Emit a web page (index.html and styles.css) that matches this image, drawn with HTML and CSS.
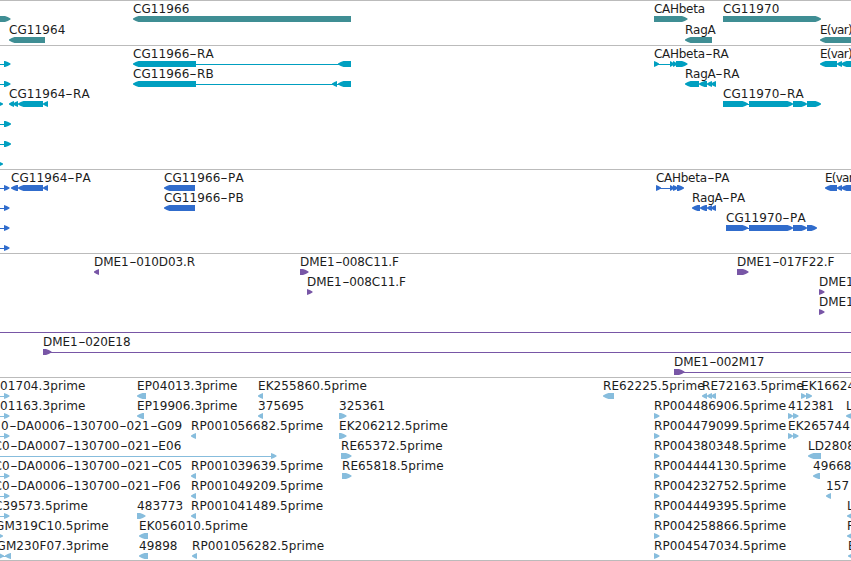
FILE: index.html
```
<!DOCTYPE html>
<html lang="en">
<head>
    <meta charset="UTF-8">
    <meta name="viewport" content="width=device-width, initial-scale=1.0">
    <title>Genome Browser</title>
    <link rel="stylesheet" href="styles.css">
</head>
<body>
    <div class="browser">
        <div class="track genes" id="genes"></div>
        <div class="track transcripts" id="transcripts"></div>
        <div class="track proteins" id="proteins"></div>
        <div class="track clones" id="clones"></div>
        <div class="track ests" id="ests"></div>
    </div>

    <script src="tracks.js"></script>
</body>
</html>
```

FILE: styles.css
```
body {
    margin: 0;
    background-color: #fff;
    overflow: hidden;
}

.browser {
    width: 851px;
    height: 561px;
    box-sizing: border-box;
    overflow: hidden;
    border-bottom: 1px solid #bbb;
}

.track {
    box-sizing: border-box;
    border-top: 1px solid #bbb;
    overflow: hidden;
}

.genes {
    height: 45px;
    color: #3f8e94;
}

.transcripts {
    height: 124px;
    color: #009fc0;
}

.proteins {
    height: 84px;
    color: #306ccc;
}

.clones {
    height: 124px;
    color: #7856a6;
}

.ests {
    height: 183px;
    color: #87bddd;
}

.lane {
    position: relative;
    height: 20px;
}

.genes .lane {
    height: 21px;
}

.lane svg {
    display: block;
    position: absolute;
    left: 0;
    top: 15px;
    width: 851px;
    height: 6px;
    fill: currentColor;
    overflow: visible;
}

/* labels and features sit at their place on the sequence */
.label {
    position: absolute;
    top: 1px;
    font-family: "DejaVu Sans", sans-serif;
    font-size: 12px;
    line-height: 15px;
    letter-spacing: 0.08px;
    font-kerning: none;
    white-space: nowrap;
    color: #1c1c1c;
}

.label.tight {
    letter-spacing: -0.28px;
}

.label.tighter {
    letter-spacing: -0.75px;
}

.clones .label {
    letter-spacing: -0.08px;
}

.dash {
    display: inline-block;
    width: 7.7px;
    text-align: center;
    letter-spacing: 0;
    transform: scaleX(1.7);
}
```

FILE: tracks.js
```
// a label is [x, text], a feature is [start, end, direction]
// direction: '>' forward, '<' reverse, '-' thin line
const rp = [654, 659.5, '>'];
const edge = [[-1, 5, '-'], [4, 9.5, '>']];

const tracks = {
    genes: [
        {
            labels: [[133, 'CG11966'], [654, 'CAHbeta'], [723, 'CG11970']],
            features: [[-9, 10.5, '>'], [133, 351, '<'], [654, 687.5, '>'], [723, 821, '>']]
        },
        {
            labels: [[9, 'CG11964'], [685, 'RagA'], [820, 'E(var)']],
            features: [[9, 45, '<'], [685, 712, '<'], [820, 870, '<']]
        }
    ],
    transcripts: [
        {
            labels: [[133, 'CG11966-RA'], [654, 'CAHbeta-RA'], [820, 'E(var)']],
            features: [[-1, 5, '-'], [4, 10.5, '>'], [133, 196, '<'], [196, 339, '-'], [338, 351, '<'],
                [654, 659, '>'], [657, 671, '-'], [670, 674, '>'], [673, 677, '>'], [676, 687.5, '>'],
                [820, 837, '<'], [837, 842, '<'], [841, 870, '<']]
        },
        {
            labels: [[133, 'CG11966-RB'], [685, 'RagA-RA']],
            features: [[-1, 5, '-'], [4, 10.5, '>'], [133, 196, '<'], [196, 339, '-'], [332, 337, '<'], [338, 351, '<'],
                [685, 699, '<'], [699, 707, '<'], [707, 712, '<'], [711, 716, '<']]
        },
        {
            labels: [[9, 'CG11964-RA'], [723, 'CG11970-RA']],
            features: [[-3, 3, '>'], [9, 14, '<'], [13, 18, '<'], [18, 43, '<'], [43, 48, '<'],
                [723, 748, '>'], [747, 750, '-'], [749, 793, '>'], [793, 807, '>'], [807, 821, '>']]
        },
        { labels: [], features: [[-1, 5, '-'], [4, 11, '>']] },
        { labels: [], features: [[-1, 5, '-'], [4, 11, '>']] },
        { labels: [], features: [[-3, 3, '>']] }
    ],
    proteins: [
        {
            labels: [[11, 'CG11964-PA'], [164, 'CG11966-PA'], [656, 'CAHbeta-PA'], [825, 'E(var)']],
            features: [...edge, [11, 18, '<'], [18, 43, '<'], [43, 48, '<'], [164, 195, '<'],
                [656, 661, '>'], [659, 671, '-'], [670, 674, '>'], [673, 678, '>'], [677, 684, '>'],
                [825, 837, '<'], [837, 842, '<'], [841, 870, '<']]
        },
        {
            labels: [[164, 'CG11966-PB'], [692, 'RagA-PA']],
            features: [...edge, [164, 195, '<'], [692, 700, '<'], [700, 707, '<'], [707, 712, '<'], [711, 716, '<']]
        },
        {
            labels: [[726, 'CG11970-PA']],
            features: [...edge, [726, 748, '>'], [747, 750, '-'], [749, 793, '>'], [793, 807, '>'], [807, 817, '>']]
        },
        { labels: [], features: [...edge] }
    ],
    clones: [
        {
            labels: [[94, 'DME1-010D03.R'], [300, 'DME1-008C11.F'], [737, 'DME1-017F22.F']],
            features: [[94, 99, '<'], [300, 308.5, '>'], [737, 748.5, '>']]
        },
        {
            labels: [[307, 'DME1-008C11.F'], [819, 'DME1']],
            features: [[307, 312.5, '>'], [819, 824.5, '>']]
        },
        { labels: [[819, 'DME1']], features: [[819, 824.5, '>']] },
        { labels: [], features: [[0, 851, '-']] },
        { labels: [[43, 'DME1-020E18']], features: [[43, 51.5, '>'], [49, 851, '-']] },
        { labels: [[674, 'DME1-002M17']], features: [[674, 684.5, '>'], [682, 851, '-']] }
    ],
    ests: [
        {
            labels: [[0, '01704.3prime'], [137, 'EP04013.3prime'], [258, 'EK255860.5prime'],
                [603, 'RE62225.5prime'], [702, 'RE72163.5prime'], [801, 'EK16624']],
            features: [...edge, [137, 146, '<'], [258, 263, '<'], [603, 614, '<'],
                [702, 707, '<'], [707, 712, '<'], [711, 716, '<'], [801, 806, '>'], [806, 812, '>']]
        },
        {
            labels: [[0, '01163.3prime'], [137, 'EP19906.3prime'], [258, '375695'], [339, '325361'],
                [654, 'RP004486906.5prime'], [788, '412381'], [846, 'L']],
            features: [...edge, [137, 144, '<'], [258, 263, '<'], [339, 346.5, '>'], rp,
                [788, 793, '>'], [793, 798.5, '>'], [846, 857, '<']]
        },
        {
            labels: [[1, '0-DA0006-130700-021-G09'], [191, 'RP001056682.5prime'], [339, 'EK206212.5prime'],
                [654, 'RP004479099.5prime'], [788, 'EK265744']],
            features: [...edge, [191, 196, '<'], [339, 346.5, '>'], rp, [788, 793, '>'], [793, 798.5, '>']]
        },
        {
            labels: [[-6.5, 'C0-DA0007-130700-021-E06'], [341, 'RE65372.5prime'],
                [654, 'RP004380348.5prime'], [808, 'LD2808']],
            features: [[-1, 272, '-'], [271, 276.5, '>'], [341, 351.5, '>'], rp, [808, 821, '<']]
        },
        {
            labels: [[-6.5, 'C0-DA0006-130700-021-C05'], [191, 'RP001039639.5prime'], [342, 'RE65818.5prime'],
                [654, 'RP004444130.5prime'], [813, '49668']],
            features: [...edge, [191, 196, '<'], [342, 351.5, '>'], rp, [813, 820, '<']]
        },
        {
            labels: [[-6.5, 'C0-DA0006-130700-021-F06'], [191, 'RP001049209.5prime'],
                [654, 'RP004232752.5prime'], [826, '157']],
            features: [...edge, [191, 196, '<'], rp, [826, 831, '<']]
        },
        {
            labels: [[-6, 'C39573.5prime'], [137, '483773'], [191, 'RP001041489.5prime'],
                [654, 'RP004449395.5prime'], [847, 'L']],
            features: [...edge, [137, 145.5, '>'], [191, 196, '<'], rp, [847, 857, '<']]
        },
        {
            labels: [[-5, 'GM319C10.5prime'], [139, 'EK056010.5prime'],
                [654, 'RP004258866.5prime'], [847, 'F']],
            features: [[-3, 3, '>'], [139, 148, '<'], rp, [847, 857, '<']]
        },
        {
            labels: [[-3.5, 'GM230F07.3prime'], [139, '49898'], [192, 'RP001056282.5prime'],
                [654, 'RP004547034.5prime'], [848, 'E']],
            features: [[-6, 4, '>'], [2, 6, '-'], [5, 11, '<'], [139, 148, '<'], [192, 197, '<'], rp, [848, 857, '<']]
        }
    ]
};

function drawFeature([start, end, direction]) {
    if (direction === '-') {
        return `<rect x="${start}" y="3" width="${end - start}" height="1" shape-rendering="crispEdges"/>`;
    }
    const head = Math.min(5.5, end - start);
    if (direction === '>') {
        const neck = end - head;
        const bend = end - head / 2;
        return `<path d="M${start} 0H${neck}Q${bend} 0.8 ${end} 2.6V3.6Q${bend} 5.2 ${neck} 6H${start}Z"/>`;
    }
    const neck = start + head;
    const bend = start + head / 2;
    return `<path d="M${end} 0H${neck}Q${bend} 0.8 ${start} 2.6V3.6Q${bend} 5.2 ${neck} 6H${end}Z"/>`;
}

function drawLabel([x, text]) {
    const html = text.replace(/-/g, '<span class="dash">-</span>');
    let fit = '';
    if (/^(CAH|Rag)/.test(text)) fit = ' tight';
    if (text.startsWith('E(')) fit = ' tighter';
    return `<span class="label${fit}" style="left: ${x}px">${html}</span>`;
}

for (const id in tracks) {
    document.getElementById(id).innerHTML = tracks[id].map(lane => `
        <div class="lane">
            <svg>${lane.features.map(drawFeature).join('')}</svg>
            ${lane.labels.map(drawLabel).join('')}
        </div>`).join('');
}
```
